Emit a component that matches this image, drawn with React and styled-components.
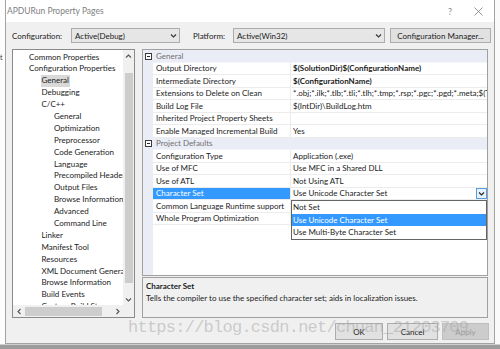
import React from "react";
import styled, { createGlobalStyle } from "styled-components";

const GlobalStyle = createGlobalStyle`
  html, body { margin: 0; padding: 0; width: 500px; height: 349px; overflow: hidden; background: #fff; }
  body { font-family: Lato, "Liberation Sans", sans-serif; font-size: 8px; color: #1b1b1b; }
  * { box-sizing: border-box; }
`;

const treeItems = [
  ["Common Properties", 0],
  ["Configuration Properties", 0],
  ["General", 1, true],
  ["Debugging", 1],
  ["C/C++", 1],
  ["General", 2],
  ["Optimization", 2],
  ["Preprocessor", 2],
  ["Code Generation", 2],
  ["Language", 2],
  ["Precompiled Headers", 2],
  ["Output Files", 2],
  ["Browse Information", 2],
  ["Advanced", 2],
  ["Command Line", 2],
  ["Linker", 1],
  ["Manifest Tool", 1],
  ["Resources", 1],
  ["XML Document Generator", 1],
  ["Browse Information", 1],
  ["Build Events", 1],
  ["Custom Build Step", 1],
];

const sections = [
  {
    title: "General",
    rows: [
      ["Output Directory", "$(SolutionDir)$(ConfigurationName)", true],
      ["Intermediate Directory", "$(ConfigurationName)", true],
      ["Extensions to Delete on Clean", "*.obj;*.ilk;*.tlb;*.tli;*.tlh;*.tmp;*.rsp;*.pgc;*.pgd;*.meta;$(TargetPath)"],
      ["Build Log File", "$(IntDir)\\BuildLog.htm"],
      ["Inherited Project Property Sheets", ""],
      ["Enable Managed Incremental Build", "Yes"],
    ],
  },
  {
    title: "Project Defaults",
    rows: [
      ["Configuration Type", "Application (.exe)"],
      ["Use of MFC", "Use MFC in a Shared DLL"],
      ["Use of ATL", "Not Using ATL"],
      ["Character Set", "Use Unicode Character Set", false, true],
      ["Common Language Runtime support", "No Common Language Runtime support"],
      ["Whole Program Optimization", "No Whole Program Optimization"],
    ],
  },
];

const Chevron = ({ dir = "down", size = 7, color = "#333" }) => {
  const paths = {
    down: "M1 2.5l2.5 2.5L6 2.5",
    up: "M1 4.5L3.5 2 6 4.5",
    left: "M4.5 1L2 3.5 4.5 6",
    right: "M2.5 1L5 3.5 2.5 6",
  };
  return (
    <svg width={size} height={size} viewBox="0 0 7 7">
      <path d={paths[dir]} fill="none" stroke={color} strokeWidth="1.1" />
    </svg>
  );
};

const Collapse = () => (
  <svg width="7" height="7" viewBox="0 0 7 7">
    <rect x="0.5" y="0.5" width="6" height="6" fill="#fff" stroke="#3a3a3a" />
    <path d="M2 3.5h3" stroke="#222" />
  </svg>
);

export default function App() {
  return (
    <>
      <GlobalStyle />
      <Screen>
        <Desk>
          <BackWindow>
            <span>t</span>
          </BackWindow>
          <Dialog>
            <TitleBar>
              <Title>APDURun Property Pages</Title>
              <TitleButton>?</TitleButton>
              <TitleButton>
                <svg width="9" height="9" viewBox="0 0 9 9">
                  <path d="M0.5 0.5l8 8M8.5 0.5l-8 8" stroke="#777" strokeWidth="0.8" />
                </svg>
              </TitleButton>
            </TitleBar>

            <ConfigRow>
              <Label>Configuration:</Label>
              <Select $w={109}>
                <span>Active(Debug)</span>
                <Chevron />
              </Select>
              <Label $gap={8}>Platform:</Label>
              <Select $w={152}>
                <span>Active(Win32)</span>
                <Chevron />
              </Select>
              <Button $w={101}>Configuration Manager...</Button>
            </ConfigRow>

            <Body>
              <TreePanel>
                <TreeList>
                  {treeItems.map(([label, level, sel], i) => (
                    <TreeItem key={i} $level={level}>
                      <TreeLabel $selected={sel}>{label}</TreeLabel>
                    </TreeItem>
                  ))}
                </TreeList>
                <VScroll>
                  <ScrollArrow><Chevron dir="up" color="#555" /></ScrollArrow>
                  <VTrack><VThumb /></VTrack>
                  <ScrollArrow><Chevron dir="down" color="#555" /></ScrollArrow>
                </VScroll>
                <HScroll>
                  <ScrollArrow $h><Chevron dir="left" color="#555" /></ScrollArrow>
                  <HTrack><HThumb /></HTrack>
                  <ScrollArrow $h><Chevron dir="right" color="#555" /></ScrollArrow>
                </HScroll>
                <Corner />
              </TreePanel>

              <RightColumn>
                <PropGrid>
                  {sections.map((s) => (
                    <React.Fragment key={s.title}>
                      <Gutter><Collapse /></Gutter>
                      <SectionHead>{s.title}</SectionHead>
                      {s.rows.map(([name, value, bold, selected]) => (
                        <React.Fragment key={name}>
                          <Gutter />
                          <NameCell $selected={selected}>{name}</NameCell>
                          <ValueCell $bold={bold}>
                            <ValueText>{value}</ValueText>
                            {selected && (
                              <ComboButton>
                                <Chevron color="#222" />
                              </ComboButton>
                            )}
                          </ValueCell>
                        </React.Fragment>
                      ))}
                    </React.Fragment>
                  ))}
                  <DropList>
                    <DropItem>Not Set</DropItem>
                    <DropItem $selected>Use Unicode Character Set</DropItem>
                    <DropItem>Use Multi-Byte Character Set</DropItem>
                  </DropList>
                </PropGrid>
                <Description>
                  <DescTitle>Character Set</DescTitle>
                  <DescText>
                    Tells the compiler to use the specified character set; aids in localization issues.
                  </DescText>
                </Description>
              </RightColumn>
            </Body>

            <ButtonRow>
              <Button $w={48}>OK</Button>
              <Button $w={51}>Cancel</Button>
              <Button $w={47} $disabled>Apply</Button>
            </ButtonRow>
          </Dialog>
          <BackWindow $right />
        </Desk>
        <Taskbar />
        <Watermark>https://blog.csdn.net/chuan_21203709</Watermark>
      </Screen>
    </>
  );
}

const Screen = styled.div`
  position: relative;
  width: 500px;
  height: 349px;
  display: flex;
  flex-direction: column;
  overflow: hidden;
`;

const Desk = styled.div`
  display: flex;
  height: 344px;
`;

const BackWindow = styled.div`
  width: 5px;
  background: #fdfdfd;
  color: #333;
  font-size: 7px;
  padding-top: 53px;
  overflow: hidden;
  ${(p) => p.$right && "background: #fafafa;"}
`;

const Dialog = styled.div`
  width: 490px;
  display: flex;
  flex-direction: column;
  background: #f0f0f0;
  border: 1px solid #a3a3a3;
  border-top: none;
`;

const TitleBar = styled.div`
  height: 22px;
  display: flex;
  align-items: center;
  background: #fff;
  padding: 0 2px 0 1px;
`;

const Title = styled.div`
  flex: 1;
  color: #808080;
  font-size: 8.5px;
`;

const TitleButton = styled.div`
  width: 28px;
  display: flex;
  justify-content: center;
  align-items: center;
  color: #888;
  font-size: 9px;
`;

const ConfigRow = styled.div`
  display: flex;
  align-items: center;
  height: 15px;
  margin-top: 6px;
  padding-left: 6px;
`;

const Label = styled.div`
  margin-left: ${(p) => p.$gap || 0}px;
  width: ${(p) => (p.$gap ? 40 : 59)}px;
`;

const Select = styled.div`
  width: ${(p) => p.$w}px;
  height: 15px;
  margin-right: 5px;
  display: flex;
  align-items: center;
  justify-content: space-between;
  padding: 0 2px 0 3px;
  background: #e6e6e6;
  border: 1px solid #acacac;
`;

const Button = styled.div`
  width: ${(p) => p.$w}px;
  height: 17px;
  display: flex;
  align-items: center;
  justify-content: center;
  background: ${(p) => (p.$disabled ? "#cccccc" : "#e1e1e1")};
  border: 1px solid ${(p) => (p.$disabled ? "#bfbfbf" : "#adadad")};
  color: ${(p) => (p.$disabled ? "#9a9a9a" : "#1b1b1b")};
  ${ConfigRow} & { height: 15px; }
`;

const Body = styled.div`
  display: flex;
  gap: 7px;
  height: 269px;
  margin-top: 6px;
  padding: 0 6px;
`;

const TreePanel = styled.div`
  width: 123px;
  display: grid;
  grid-template-columns: 1fr 11px;
  grid-template-rows: 1fr 12px;
  background: #fff;
  border: 1px solid #8a8a8a;
`;

const TreeList = styled.div`
  overflow: hidden;
  padding-top: 1.5px;
`;

const TreeItem = styled.div`
  height: 11.9px;
  line-height: 11.9px;
  white-space: nowrap;
  padding-left: ${(p) => 16 + p.$level * 12.5}px;
`;

const TreeLabel = styled.span`
  display: inline-block;
  padding: 0 1px;
  margin-left: -1px;
  background: ${(p) => (p.$selected ? "#d9d9d9" : "transparent")};
`;

const VScroll = styled.div`
  display: flex;
  flex-direction: column;
  background: #f0f0f0;
`;

const ScrollArrow = styled.div`
  flex: none;
  width: ${(p) => (p.$h ? "12px" : "11px")};
  height: 12px;
  display: flex;
  align-items: center;
  justify-content: center;
`;

const VTrack = styled.div`
  flex: 1;
  padding: 11px 1px 0 2px;
`;

const VThumb = styled.div`
  height: 210px;
  background: #cdcdcd;
`;

const HScroll = styled.div`
  display: flex;
  background: #f0f0f0;
`;

const HTrack = styled.div`
  flex: 1;
  padding: 2px 0 1px;
`;

const HThumb = styled.div`
  width: 77px;
  height: 100%;
  background: #cdcdcd;
`;

const Corner = styled.div`
  background: #f0f0f0;
`;

const RightColumn = styled.div`
  width: 346px;
  display: flex;
  flex-direction: column;
  gap: 1px;
`;

const PropGrid = styled.div`
  position: relative;
  height: 227px;
  display: grid;
  grid-template-columns: 10px 138px 1fr;
  grid-auto-rows: 12.5px;
  align-content: start;
  background: linear-gradient(to right, #eaedf6 10px, #fff 10px);
  border: 1px solid #a0a0a0;
  overflow: hidden;
`;

const Gutter = styled.div`
  display: flex;
  align-items: center;
  justify-content: center;
`;

const SectionHead = styled.div`
  grid-column: 2 / 4;
  display: flex;
  align-items: center;
  padding-left: 3px;
  background: #eaedf6;
  color: #707070;
  border-bottom: 1px solid #f4f5fa;
`;

const NameCell = styled.div`
  display: flex;
  align-items: center;
  padding-left: 3px;
  white-space: nowrap;
  overflow: hidden;
  border-bottom: 1px solid #ececec;
  border-right: 1px solid #ececec;
  background: ${(p) => (p.$selected ? "#3399ff" : "#fff")};
  color: ${(p) => (p.$selected ? "#fff" : "inherit")};
`;

const ValueCell = styled.div`
  display: flex;
  align-items: center;
  padding-left: 2px;
  white-space: nowrap;
  overflow: hidden;
  border-bottom: 1px solid #ececec;
  font-weight: ${(p) => (p.$bold ? 700 : 400)};
`;

const ValueText = styled.span`
  flex: 1;
  overflow: hidden;
`;

const ComboButton = styled.div`
  width: 11px;
  height: 11px;
  flex: none;
  display: flex;
  align-items: center;
  justify-content: center;
  border: 1px solid #569de5;
  background: #e5f1fb;
`;

const DropList = styled.div`
  position: absolute;
  top: 150px;
  left: 148px;
  right: 0;
  background: #fff;
  border: 1px solid #646464;
`;

const DropItem = styled.div`
  height: 12.5px;
  line-height: 12.5px;
  padding-left: 1px;
  background: ${(p) => (p.$selected ? "#3399ff" : "#fff")};
  color: ${(p) => (p.$selected ? "#fff" : "inherit")};
`;

const Description = styled.div`
  flex: 1;
  padding: 3px 3px;
  background: #f0f0f0;
  border: 1px solid #a0a0a0;
`;

const DescTitle = styled.div`
  font-weight: 700;
  line-height: 11px;
`;

const DescText = styled.div`
  line-height: 13px;
`;

const ButtonRow = styled.div`
  display: flex;
  justify-content: flex-end;
  gap: 4px;
  margin-top: 5px;
  padding-right: 5px;
`;

const Taskbar = styled.div`
  flex: 1;
  background: #9c9c9c;
  border-top: 1px solid #d0d0d0;
`;

const Watermark = styled.div`
  position: absolute;
  left: 128px;
  top: 318px;
  font-family: "Liberation Mono", monospace;
  font-size: 17px;
  letter-spacing: -0.75px;
  color: rgba(165, 165, 165, 0.5);
  white-space: nowrap;
  pointer-events: none;
`;
